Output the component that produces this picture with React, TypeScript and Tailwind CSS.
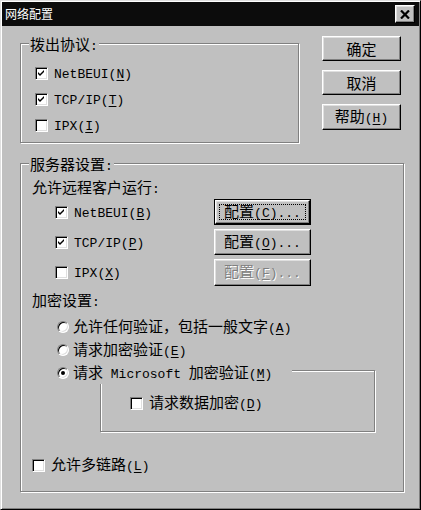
import React from 'react';

const mono = "font-['Liberation_Mono','Noto_Sans_CJK_SC',monospace] text-[13px]";

// splits a label into CJK and ascii runs, ascii gets the narrow mono face
function Txt({ s }: { s: string }) {
  const parts = s.split(/([\x20-\x7e]+)/).filter(Boolean);
  return (
    <>
      {parts.map((p, i) =>
        /^[\x20-\x7e]+$/.test(p) ? (
          <span key={i} className={`${mono} whitespace-pre`}>{p}</span>
        ) : (
          <span key={i}>{p}</span>
        )
      )}
    </>
  );
}

function Label({ t, k, tail }: { t: string; k?: string; tail?: string }) {
  return (
    <span className="whitespace-nowrap">
      <Txt s={t} />
      {k && (
        <span className={mono}>
          (<span className="underline underline-offset-2">{k}</span>){tail}
        </span>
      )}
    </span>
  );
}

function Check({ on }: { on?: boolean }) {
  return (
    <span className="w-[13px] h-[13px] shrink-0 flex items-center justify-center bg-white border border-t-[#808080] border-l-[#808080] border-r-white border-b-white shadow-[inset_1px_1px_0_#000,inset_-1px_-1px_0_#dfdfdf]">
      {on && (
        <svg width="7" height="7" viewBox="0 0 7 7">
          <path d="M0 2 L2 4 L6 0 L6 2 L2 6 L0 4 Z" fill="#000" />
        </svg>
      )}
    </span>
  );
}

function Radio({ on }: { on?: boolean }) {
  return (
    <span className="w-[12px] h-[12px] shrink-0 rounded-full flex items-center justify-center bg-white border border-t-[#808080] border-l-[#808080] border-r-white border-b-white shadow-[inset_1px_1px_0_#000,inset_-1px_-1px_0_#dfdfdf]">
      {on && <span className="w-[4px] h-[4px] rounded-full bg-black" />}
    </span>
  );
}

function CheckRow({ on, children, gap = 'gap-[6px]' }: { on?: boolean; children: React.ReactNode; gap?: string }) {
  return (
    <div className={`flex items-center ${gap}`}>
      <Check on={on} />
      {children}
    </div>
  );
}

function Btn({ children, className = '' }: { children: React.ReactNode; className?: string }) {
  return (
    <div className={`flex items-center justify-center bg-[#c0c0c0] border border-t-white border-l-white border-r-black border-b-black shadow-[inset_-1px_-1px_0_#808080,inset_1px_1px_0_#dfdfdf] ${className}`}>
      {children}
    </div>
  );
}

function GroupBox({ title, className = '', children }: { title?: string; className?: string; children: React.ReactNode }) {
  return (
    <div className={`relative border border-[#808080] shadow-[inset_1px_1px_0_#fff,1px_1px_0_#fff] ${className}`}>
      {title && (
        <span className="absolute -top-[9px] left-[8px] px-[1px] bg-[#c0c0c0] leading-[17px]">
          <Txt s={title} />
        </span>
      )}
      {children}
    </div>
  );
}

export default function App() {
  return (
    <div className="w-[421px] h-[510px] p-[1px] flex flex-col bg-[#c0c0c0] border border-t-[#dfdfdf] border-l-[#dfdfdf] border-r-black border-b-black shadow-[inset_1px_1px_0_#fff,inset_-1px_-1px_0_#808080] font-['Noto_Sans_CJK_SC',sans-serif] text-[15px] leading-[17px] text-black">
      {/* Title bar */}
      <div className="h-[24px] shrink-0 flex items-center justify-between pl-[3px] pr-[4px] bg-[#0c0c0c]">
        <span className="text-white text-[12px] leading-[14px]">网络配置</span>
        <div className="w-[20px] h-[18px] flex items-center justify-center bg-[#c0c0c0] border border-t-white border-l-white border-r-black border-b-black shadow-[inset_-1px_-1px_0_#808080,inset_1px_1px_0_#dfdfdf]">
          <svg width="10" height="9" viewBox="0 0 10 9">
            <path d="M1 0.5 L9 8.5 M9 0.5 L1 8.5" stroke="#000" strokeWidth="2.2" />
          </svg>
        </div>
      </div>

      {/* Body */}
      <div className="flex-1 px-[18px]">
        <div className="flex">
          <GroupBox title="拨出协议:" className="mt-[17px] w-[281px] h-[100px]">
            <div className="pt-[16px] pl-[14px] flex flex-col">
              <div className="h-[26px] flex items-center">
                <CheckRow on><Label t="NetBEUI" k="N" /></CheckRow>
              </div>
              <div className="h-[26px] flex items-center">
                <CheckRow on><Label t="TCP/IP" k="T" /></CheckRow>
              </div>
              <div className="h-[26px] flex items-center">
                <CheckRow><Label t="IPX" k="I" /></CheckRow>
              </div>
            </div>
          </GroupBox>

          <div className="ml-[23px] mt-[10px] flex flex-col gap-[9px]">
            <Btn className="w-[79px] h-[25px]"><Label t="确定" /></Btn>
            <Btn className="w-[79px] h-[25px]"><Label t="取消" /></Btn>
            <Btn className="w-[79px] h-[26px]"><Label t="帮助" k="H" /></Btn>
          </div>
        </div>

        <GroupBox title="服务器设置:" className="mt-[20px] w-[384px] h-[329px]">
          <div className="pl-[11px] flex flex-col">
            <div className="mt-[15px] h-[18px] flex items-center">
              <Label t="允许远程客户运行:" />
            </div>

            <div className="h-[30px] flex items-center pl-[23px]">
              <div className="w-[159px]">
                <CheckRow on><Label t="NetBEUI" k="B" /></CheckRow>
              </div>
              <div className="border border-black">
                <Btn className="relative w-[95px] h-[24px]">
                  <span className="absolute inset-[3px] border border-dotted border-black" />
                  <Label t="配置" k="C" tail="..." />
                </Btn>
              </div>
            </div>
            <div className="h-[30px] flex items-center pl-[23px]">
              <div className="w-[159px]">
                <CheckRow on><Label t="TCP/IP" k="P" /></CheckRow>
              </div>
              <Btn className="w-[97px] h-[26px]"><Label t="配置" k="O" tail="..." /></Btn>
            </div>
            <div className="h-[30px] flex items-center pl-[23px]">
              <div className="w-[159px]">
                <CheckRow><Label t="IPX" k="X" /></CheckRow>
              </div>
              <Btn className="w-[97px] h-[27px] text-[#808080] [text-shadow:1px_1px_0_#fff]">
                <Label t="配置" k="F" tail="..." />
              </Btn>
            </div>

            <div className="mt-[5px] h-[18px] flex items-center">
              <Label t="加密设置:" />
            </div>

            <div className="mt-[5px] pl-[25px] flex flex-col">
              <div className="h-[23px] flex items-center gap-[4px]">
                <Radio /><Label t="允许任何验证，包括一般文字" k="A" />
              </div>
              <div className="h-[23px] flex items-center gap-[4px]">
                <Radio /><Label t="请求加密验证" k="E" />
              </div>
              <div className="relative z-10 w-fit h-[23px] pr-[20px] flex items-center gap-[4px] bg-[#c0c0c0]">
                <Radio on /><Label t="请求 Microsoft 加密验证" k="M" />
              </div>
            </div>

            <GroupBox className="-mt-[14px] ml-[68px] w-[275px] h-[62px]">
              <div className="mt-[23px] pl-[29px] h-[18px] flex items-center">
                <CheckRow><Label t="请求数据加密" k="D" /></CheckRow>
              </div>
            </GroupBox>

            <div className="mt-[24px] h-[18px] flex items-center">
              <CheckRow><Label t="允许多链路" k="L" /></CheckRow>
            </div>
          </div>
        </GroupBox>
      </div>
    </div>
  );
}
